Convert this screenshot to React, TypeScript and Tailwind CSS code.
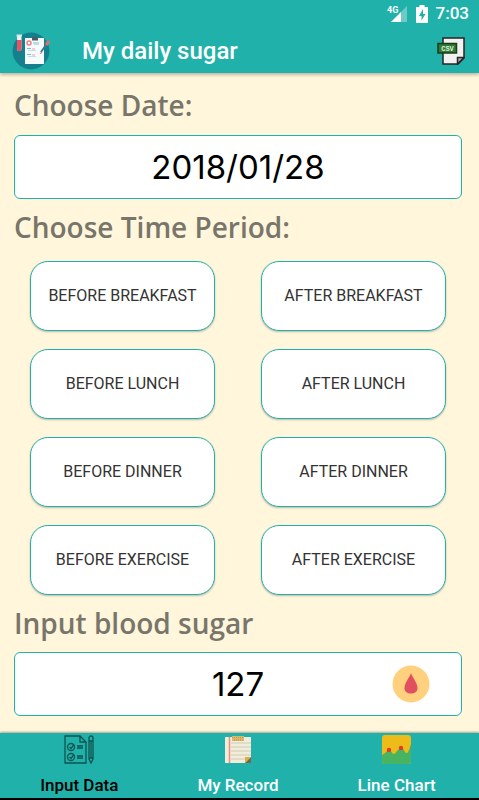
import { useState } from 'react';

const periods = [
  'BEFORE BREAKFAST',
  'AFTER BREAKFAST',
  'BEFORE LUNCH',
  'AFTER LUNCH',
  'BEFORE DINNER',
  'AFTER DINNER',
  'BEFORE EXERCISE',
  'AFTER EXERCISE',
];

function LogoIcon() {
  return (
    <svg viewBox="0 0 38 38" className="size-[38px] shrink-0" aria-hidden="true">
      <circle cx="19" cy="19" r="18.5" fill="#15808d" />
      <path d="M13 6h19v26H13z" fill="#f6fafb" />
      <path d="M20 5.500h1.500a2 2 0 0 1 3.500 0h1v3h-6z" fill="#4b5a63" />
      <circle cx="17" cy="11" r="2" fill="#fff" stroke="#ef7f85" strokeWidth="1.500" />
      <path d="M21 11h6M15 16.500h4M15 22.500h4" stroke="#6cc5cb" strokeWidth="1" />
      <path d="M22 12.500h5M16 18.500h8M16 24.500h8" stroke="#c4dce4" strokeWidth="1" />
      <path d="M20 17h3M20 23h3" stroke="#eda3aa" strokeWidth="1" />
      <path d="M29 20l5-7" stroke="#347a91" strokeWidth="2" />
      <path d="M34 13l3-4" stroke="#df6d6d" strokeWidth="3" />
      <path d="M28 21.500l2-1" stroke="#df6d6d" strokeWidth="1.200" />
      <rect x="5" y="3" width="4.500" height="16" rx="2" fill="#f2f3f5" />
      <path d="M5 8h4.500v9a2.250 2.250 0 0 1-4.500 0z" fill="#e95262" />
      <path d="M4.500 2.500h5.500v2h-5.500z" fill="#dbe6ea" />
    </svg>
  );
}

function CsvIcon() {
  return (
    <svg viewBox="0 0 28 28" className="h-7 w-7" aria-hidden="true">
      <path d="M6 1h21v20l-6 6H6z" fill="#f1f1f1" stroke="#252525" strokeWidth="1.500" />
      <path d="M27 20.500h-6.500V27z" fill="#a8a8a8" stroke="#252525" strokeWidth="1.500" />
      <rect x="1" y="6.500" width="18.500" height="9.500" fill="#317a36" stroke="#173e1b" strokeWidth="1.500" />
      <text x="10.500" y="13.700" textAnchor="middle" fontFamily="Liberation Mono, monospace" fontSize="7" fontWeight="bold" fill="#dcefdc">CSV</text>
    </svg>
  );
}

function SignalIcon() {
  return (
    <svg viewBox="0 0 21 18" className="h-[18px] w-[21px]" aria-hidden="true">
      <path d="M20 1v16H4z" fill="#6dcac5" />
      <path d="M14 7v10H4z" fill="#fff" />
      <rect width="11" height="9" fill="#20b2aa" />
      <text x="0" y="8" fontFamily="Roboto, sans-serif" fontSize="9" fontWeight="bold" fill="#fff">4G</text>
    </svg>
  );
}

function BatteryIcon() {
  return (
    <svg viewBox="0 0 12 18" className="h-[18px] w-3" aria-hidden="true">
      <path d="M3.500 0h5v2H11a1 1 0 0 1 1 1v14a1 1 0 0 1-1 1H1a1 1 0 0 1-1-1V3a1 1 0 0 1 1-1h2.500z" fill="#fff" />
      <path d="M7 4L3 11h2.500v4.500L9.500 9H7z" fill="#20b2aa" />
    </svg>
  );
}

function DropIcon() {
  return (
    <svg viewBox="0 0 38 38" className="size-[38px]" aria-hidden="true">
      <circle cx="19" cy="19" r="18.500" fill="#ffd07d" />
      <path d="M19 8c-1 4-6.500 9.500-6.500 15c0 4 3 5.500 6.500 5.500s6.500-1.500 6.500-5.500C25.500 17.500 20 12 19 8z" fill="#e1505f" />
    </svg>
  );
}

function InputIcon() {
  return (
    <svg viewBox="0 0 30 30" className="size-[30px]" fill="none" stroke="#11534f" strokeWidth="1.300" aria-hidden="true">
      <path d="M1 1h15l6 6v21H1zM16 1v6h6" />
      <circle cx="7" cy="12" r="3.500" />
      <circle cx="7" cy="22" r="3.500" />
      <path d="M5.500 12l1.500 1.500 3-4M5.500 22l1.500 1.500 3-4M13 11h6M13 13h6M13 21h6M13 23h6" />
      <path d="M25 24V3a2 2 0 0 1 4 0v21l-2 4zM25 6h4M25 23h4M27 6v17" />
    </svg>
  );
}

function RecordIcon() {
  return (
    <svg viewBox="0 0 26 29" className="h-[29px] w-[26px]" aria-hidden="true">
      <path d="M0 2h26v26H0z" fill="#f2edd9" />
      <path d="M6 8h20M6 12h20M6 16h20M6 20h20M6 24h14" stroke="#d0cbba" strokeWidth="1" />
      <path d="M4.500 2v26" stroke="#ef8b87" strokeWidth="1.500" />
      <path d="M7 1h12v5H7z" fill="#d9b96c" />
      <path d="M7 2.500h12M9 5h9" stroke="#b59550" strokeWidth="1" strokeDasharray="1 1" />
      <path d="M20 28v-6h6z" fill="#dcae48" />
      <path d="M20 28l6-6v6z" fill="#726b42" />
    </svg>
  );
}

function ChartIcon() {
  return (
    <svg viewBox="0 0 29 29" className="size-[29px]" aria-hidden="true">
      <rect width="29" height="29" rx="3" fill="#edbc18" />
      <path d="M0 20c3-1 5-5 7-5s3 4 5 4 4-6 7-6 4 6 6 5 3-6 4-9v17a3 3 0 0 1-3 3H3a3 3 0 0 1-3-3z" fill="#48b360" />
      <circle cx="7" cy="15" r="2.200" fill="#e03a2d" />
      <circle cx="19" cy="13" r="2.200" fill="#e03a2d" />
    </svg>
  );
}

const tabs = [
  { label: 'Input Data', icon: InputIcon },
  { label: 'My Record', icon: RecordIcon },
  { label: 'Line Chart', icon: ChartIcon },
];

const headingClass = "font-['Open_Sans',sans-serif] text-[28px] leading-8 font-semibold text-[#78756a]";
const fieldClass = "h-16 w-full rounded-md border border-[#20b2aa] bg-white text-center font-[Inter,sans-serif] text-[33px] text-black outline-none";

export default function App() {
  const [date, setDate] = useState<string>('2018/01/28');
  const [sugar, setSugar] = useState<string>('127');
  const [period, setPeriod] = useState<string>('');
  const [tab, setTab] = useState<string>('Input Data');

  return (
    <div className="flex min-h-screen flex-col bg-[#fff6dc] font-[Roboto,sans-serif]">
      <header className="bg-[#20b2aa] text-white shadow-[0_2px_3px_rgba(0,0,0,0.25)]">
        {/* Status bar */}
        <div className="flex h-7 items-center justify-end gap-2 pr-[10px]">
          <SignalIcon />
          <BatteryIcon />
          <span className="text-[17px] font-medium">7:03</span>
        </div>
        {/* Title bar */}
        <div className="flex h-[45px] items-center pr-[14px] pl-3">
          <LogoIcon />
          <h1 className="ml-8 flex-1 text-2xl font-medium">My daily sugar</h1>
          <button type="button" aria-label="Export CSV">
            <CsvIcon />
          </button>
        </div>
      </header>

      <main className="flex-1 pr-[17px] pb-[17px] pl-[14px]">
        <label htmlFor="date" className={`mt-4 mb-[14px] block ${headingClass}`}>Choose Date:</label>
        <input id="date" type="text" className={`block ${fieldClass}`} value={date} onChange={(e) => setDate(e.target.value)} />

        <h2 className={`mt-3 mb-[18px] ${headingClass}`}>Choose Time Period:</h2>
        <div className="grid grid-cols-2 gap-x-[46px] gap-y-[18px] px-4">
          {periods.map((p) => (
            <button
              key={p}
              type="button"
              aria-pressed={period === p}
              className="h-[70px] rounded-[18px] border border-[#20b2aa] bg-white text-base whitespace-nowrap text-[#333] shadow-[0_1px_2px_rgba(0,0,0,0.25)]"
              onClick={() => setPeriod(p)}
            >
              {p}
            </button>
          ))}
        </div>

        <label htmlFor="sugar" className={`mt-3 mb-[13px] block ${headingClass}`}>Input blood sugar</label>
        <div className="relative">
          <input id="sugar" type="text" inputMode="numeric" className={`block ${fieldClass}`} value={sugar} onChange={(e) => setSugar(e.target.value)} />
          <button type="button" aria-label="Save blood sugar" className="absolute inset-y-0 right-8 flex items-center">
            <DropIcon />
          </button>
        </div>
      </main>

      <nav className="grid h-[67px] grid-cols-3 border-b-2 border-black bg-[#20b2aa] pr-[3px] shadow-[0_-1px_2px_rgba(0,0,0,0.35)]">
        {tabs.map(({ label, icon: Icon }) => (
          <button
            key={label}
            type="button"
            className={`flex flex-col items-center pt-0.5 text-[17px] font-medium ${tab === label ? 'text-black' : 'text-white'}`}
            onClick={() => setTab(label)}
          >
            <span className="flex h-[38px] items-start">
              <Icon />
            </span>
            <span className="leading-6">{label}</span>
          </button>
        ))}
      </nav>
    </div>
  );
}
